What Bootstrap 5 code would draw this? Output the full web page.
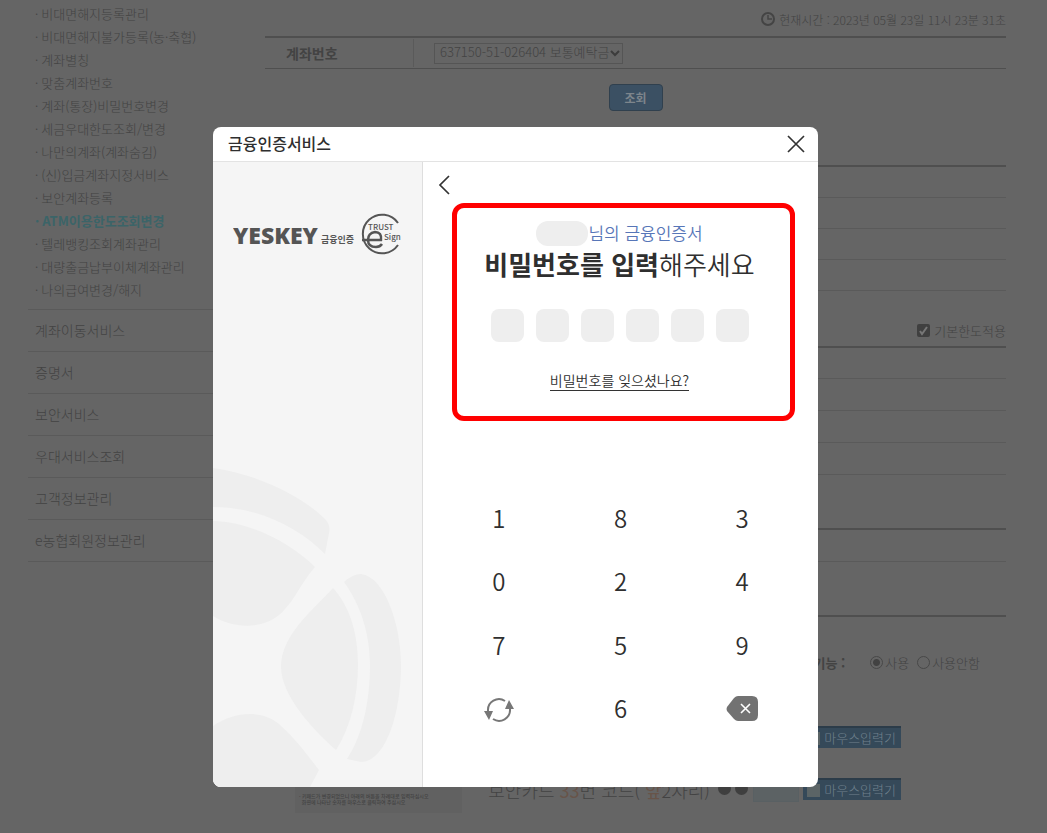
<!DOCTYPE html>
<html lang="ko">
<head>
<meta charset="utf-8">
<meta name="viewport" content="width=device-width, initial-scale=1">
<title>금융인증서비스</title>
<link href="https://cdn.jsdelivr.net/npm/bootstrap@5.3.0/dist/css/bootstrap.min.css" rel="stylesheet">
<style>
  :root { --ink:#434343; --line:#5a5a5a; --rule:#4f4f4f; --navy:#354959; }
  body { background:#656565; color:var(--ink); font-family:"Noto Sans CJK KR","Noto Sans",sans-serif; font-size:13px; line-height:23px; font-weight:300; min-height:100vh; overflow:hidden; }
  a { color:inherit; text-decoration:none; }
  button { font-family:inherit; }

  /* dimmed bank page */
  .bank-page { padding-left:28px; padding-right:41px; }
  .side-menu { width:198px; flex:none; }
  .sub-menu { padding:2px 0 8px 7px; }
  .sub-menu a::before { content:"·"; margin-right:3px; }
  .sub-menu .current { color:#3b6468; font-weight:700; }
  .side-link { display:block; height:42px; line-height:41px; padding-left:7px; font-size:14px; border-top:1px solid var(--line); }
  .side-end { border-top:1px solid var(--line); }
  .bank-main { margin-left:39px; min-width:0; }
  .clock-row { height:36px; padding-top:2px; font-size:12px; }
  .account-row { border-top:2px solid var(--rule); border-bottom:1px solid var(--rule); height:33px; }
  .account-label { width:149px; padding-left:21px; border-right:1px solid var(--line); font-weight:700; font-size:14px; line-height:28px; }
  .account-select { width:189px; height:21px; margin-left:20px; padding:0 5px 3px; background:transparent; color:var(--ink); border:1px solid #555; border-radius:0; font-size:13px; line-height:16px; font-weight:300; appearance:none; }
  .select-box { position:relative; }
  .select-box svg { position:absolute; right:3px; top:7px; pointer-events:none; }
  .query-button { width:54px; height:27px; margin-top:15px; margin-bottom:54px; border:1px solid #30404e; border-radius:4px; background:#3b5063; color:#7d858c; font-size:12px; font-weight:700; line-height:24px; padding:0; }
  .limit-table { width:100%; border-top:2px solid var(--rule); border-bottom:1px solid var(--rule); }
  .limit-table td { height:32px; padding:0; border-bottom:1px solid var(--line); }
  .limit-table.compact td { height:31px; }
  .transfer-table { margin-top:53px; }
  .section-rule { margin-top:53px; border-top:2px solid var(--rule); }
  .option-row { height:55px; padding-top:24px; }
  .tick { appearance:none; width:13px; height:13px; margin:0 4px 0 0; border-radius:2px; background:#404040 url("data:image/svg+xml,%3Csvg xmlns='http://www.w3.org/2000/svg' viewBox='0 0 13 13'%3E%3Cpath d='M3 7l2 3 5-7' fill='none' stroke='%23777' stroke-width='2'/%3E%3C/svg%3E"); }
  .dot-radio { appearance:none; width:13px; height:13px; margin:0 2px 0 0; border:1px solid #484848; border-radius:50%; }
  .dot-radio:checked { background:radial-gradient(circle,#424242 0 3px,transparent 4px); }
  .use-row { padding:34px 26px 0 0; }
  .use-title { margin-right:25px; font-weight:700; }
  .mouse-row { padding:52px 105px 0 0; }
  .mouse-button { width:98px; height:22px; padding:0 5px 0 0; border:0; border-top:2px solid #2c3c49; background:var(--navy); color:#70818d; font-size:13px; font-weight:300; line-height:18px; text-align:right; }
  .mouse-button i { float:left; width:13px; height:13px; margin:3px 0 0 4px; background:#5b6466; }
  .card-row { margin-top:6px; padding-right:105px; }
  .key-notice { width:168px; height:58px; margin:1px 26px 0 30px; background:#616161; font-size:5px; line-height:6px; font-weight:500; }
  .key-caps { height:38px; padding:27px 27px 8px 6px; }
  .key-caps i { width:8px; height:4px; background:#353e43; }
  .card-prompt { font-size:18px; line-height:24px; width:231px; white-space:nowrap; }
  .card-prompt b { color:#685449; }
  .masked i { display:inline-block; width:13px; height:13px; border-radius:50%; background:#3f3f3f; }
  .code-input { width:46px; height:24px; margin:0 4px 0 5px; padding:0 0 6px; border:1px solid #596063; background:#5c6264; color:#444; font-size:10px; text-align:center; }

  /* certificate dialog */
  .dialog-layer { position:absolute; inset:0 0 auto 0; padding:127px 16px 0 0; }
  .cert-dialog { width:605px; max-width:100%; background:#fff; border-radius:8px; overflow:hidden; color:#2f2f2f; }
  .cert-head { height:35px; padding:0 13px 0 15px; border-bottom:1px solid #e3e3e3; }
  .cert-head h1 { font-size:16px; line-height:32px; font-weight:500; margin:0 0 2px; }
  .plain-button { padding:0; border:0; background:none; color:inherit; line-height:0; }
  .cert-brand { width:210px; flex:none; background:#f5f5f5; border-right:1px solid #dedede; }
  .brand-logo { margin:48px 0 0 20px; color:#555; }
  .cert-body { padding:13px 15px 46px; min-width:0; }
  .back-button { margin-bottom:8px; align-self:flex-start; }
  .pin-box { border:5px solid #f00; border-radius:12px; margin:0 8px 0 14px; padding:13px 8px 21px 0; height:218px; }
  .owner { color:#5776b8; font-size:17px; line-height:24px; font-weight:350; }
  .owner-name { width:52px; height:25px; border-radius:12px; background:#eee; }
  .pin-title { font-size:26px; line-height:34px; font-weight:350; margin:1px 0 0; white-space:nowrap; }
  .pin-title b { font-weight:700; }
  .pin-cells { gap:12px; margin-top:28px; }
  .pin-cells input { width:33px; height:33px; border:0; border-radius:8px; background:#eee; text-align:center; }
  .forgot { margin-top:29px; font-size:14px; line-height:19px; font-weight:350; border-bottom:1px solid #333; }
  .keypad { display:grid; grid-template-columns:repeat(3,1fr); grid-template-rows:repeat(4,1fr); height:254px; margin-top:66px; }
  .keypad button { font-size:24px; font-weight:350; line-height:1; padding-bottom:2px; }
</style>
</head>
<body>
<div class="bank-page d-flex">
  <nav class="side-menu">
    <ul class="sub-menu list-unstyled mb-0 text-nowrap">
      <li><a href="#">비대면해지등록관리</a></li>
      <li><a href="#">비대면해지불가등록(농·축협)</a></li>
      <li><a href="#">계좌별칭</a></li>
      <li><a href="#">맞춤계좌번호</a></li>
      <li><a href="#">계좌(통장)비밀번호변경</a></li>
      <li><a href="#">세금우대한도조회/변경</a></li>
      <li><a href="#">나만의계좌(계좌숨김)</a></li>
      <li><a href="#">(신)입금계좌지정서비스</a></li>
      <li><a href="#">보안계좌등록</a></li>
      <li><a href="#" class="current">ATM이용한도조회변경</a></li>
      <li><a href="#">텔레뱅킹조회계좌관리</a></li>
      <li><a href="#">대량출금납부이체계좌관리</a></li>
      <li><a href="#">나의급여변경/해지</a></li>
    </ul>
    <a class="side-link" href="#">계좌이동서비스</a>
    <a class="side-link" href="#">증명서</a>
    <a class="side-link" href="#">보안서비스</a>
    <a class="side-link" href="#">우대서비스조회</a>
    <a class="side-link" href="#">고객정보관리</a>
    <a class="side-link" href="#">e농협회원정보관리</a>
    <div class="side-end"></div>
  </nav>

  <main class="bank-main flex-grow-1">
    <div class="clock-row d-flex justify-content-end align-items-center">
      <svg class="me-1" width="14" height="14" viewBox="0 0 14 14" fill="none" stroke="#444" stroke-width="2"><circle cx="7" cy="7" r="6"/><path d="M7 3v4h4" stroke-width="1.5"/></svg>
      현재시간 : 2023년 05월 23일 11시 23분 31초
    </div>
    <div class="account-row d-flex align-items-center">
      <label class="account-label" for="account">계좌번호</label>
      <div class="select-box d-flex">
        <select class="account-select" id="account"><option>637150-51-026404 보통예탁금</option></select>
        <svg width="10" height="7" viewBox="0 0 10 7" fill="none" stroke="#3c3c3c" stroke-width="2"><path d="M1 1l4 4 4-4"/></svg>
      </div>
    </div>
    <div class="text-center"><button class="query-button" type="button">조회</button></div>
    <table class="limit-table compact"><tbody><tr><td></td></tr><tr><td></td></tr><tr><td></td></tr><tr><td></td></tr></tbody></table>
    <div class="option-row d-flex justify-content-end align-items-center">
      <input class="tick" type="checkbox" id="basic" checked><label for="basic">기본한도적용</label>
    </div>
    <table class="limit-table"><tbody><tr><td></td></tr><tr><td></td></tr><tr><td></td></tr><tr><td></td></tr></tbody></table>
    <table class="limit-table transfer-table"><tbody><tr><td></td></tr></tbody></table>
    <div class="section-rule"></div>
    <div class="use-row d-flex justify-content-end align-items-center text-nowrap">
      <span class="use-title">기능 :</span>
      <input class="dot-radio" type="radio" name="use" id="use-on" checked><label class="me-2" for="use-on">사용</label>
      <input class="dot-radio" type="radio" name="use" id="use-off"><label for="use-off">사용안함</label>
    </div>
    <div class="mouse-row d-flex justify-content-end align-items-start">
      <button class="mouse-button" type="button"><i></i>마우스입력기</button>
    </div>
    <div class="card-row d-flex justify-content-end align-items-start">
      <div class="key-notice">
        <div class="key-caps d-flex justify-content-between"><i></i><i></i><i></i><i></i></div>
        <div class="ps-1">· 키패드가 변경되었으니 아래의 버튼을 차례대로 입력하십시오<br>&nbsp; 화면에 나타난 숫자를 마우스로 클릭하여 주십시오</div>
      </div>
      <label class="card-prompt mt-4" for="code">보안카드 <b>33</b>번 코드( <b>앞</b>2자리)</label>
      <span class="masked d-flex gap-1 mt-4 pt-1"><i></i><i></i></span>
      <input class="code-input mt-4" id="code" value="**" type="text">
      <button class="mouse-button mt-4" type="button"><i></i>마우스입력기</button>
    </div>
  </main>
</div>

<div class="dialog-layer d-flex justify-content-center">
  <section class="cert-dialog d-flex flex-column" role="dialog" aria-labelledby="cert-title">
    <header class="cert-head d-flex justify-content-between align-items-center">
      <h1 id="cert-title">금융인증서비스</h1>
      <button class="plain-button" type="button" aria-label="닫기"><svg width="18" height="18" viewBox="0 0 18 18" fill="none" stroke="#333" stroke-width="1.7"><path d="M1 1l16 16M17 1L1 17"/></svg></button>
    </header>
    <div class="d-flex">
      <aside class="cert-brand d-flex flex-column">
        <svg class="brand-logo" width="172" height="48" viewBox="0 0 172 48" fill="#555" font-family="'Noto Sans CJK KR',sans-serif" font-weight="700">
          <text x="0" y="34" font-family="'Open Sans','Noto Sans',sans-serif" font-weight="800" font-size="23">YESKEY</text>
          <text x="88" y="33" font-size="9">금융인증</text>
          <path d="M165 13A19.300 19.300 0 1 0 165 35" fill="none" stroke="#555" stroke-width="2"/>
          <text x="135" y="20" font-size="8" font-weight="500">TRUST</text>
          <text x="151" y="30" font-size="8" font-weight="500">Sign</text>
          <path d="M129 30H148Q149 22 142 22Q135 23 135 30Q135 37 143 37Q147 37 149 34" fill="none" stroke="#555" stroke-width="2.500"/>
        </svg>
        <svg class="mt-auto" width="209" height="322" viewBox="0 0 209 322" fill="#eee" aria-hidden="true">
          <path d="M0 3C45 9 90 32 112 54Q118 60 116 68L112 89C85 62 45 42 0 42Z"/>
          <path d="M0 56C40 57 80 80 102 102C88 118 82 134 72 144C55 165 22 165 0 151Z"/>
          <path d="M120 123C138 143 145 170 145 200C145 230 138 262 123 285C100 265 68 230 68 202C68 170 100 145 120 123Z"/>
          <path d="M131 117Q140 109 148 109C172 112 188 160 188 200C188 250 172 297 148 297L134 294C150 270 157 235 157 200C157 170 148 140 131 117Z"/>
          <path d="M0 261C20 247 48 244 66 259C84 275 95 291 106 305L97 322H0Z"/>
        </svg>
      </aside>
      <div class="cert-body flex-grow-1 d-flex flex-column">
        <button class="plain-button back-button" type="button" aria-label="뒤로"><svg width="12" height="20" viewBox="0 0 12 20" fill="none" stroke="#333" stroke-width="1.7"><path d="M11 1L2 10l9 9"/></svg></button>
        <div class="pin-box d-flex flex-column align-items-center">
          <div class="owner d-flex"><span class="owner-name"></span>님의 금융인증서</div>
          <h2 class="pin-title"><b>비밀번호를 입력</b>해주세요</h2>
          <div class="pin-cells d-flex">
            <input type="password" maxlength="1" aria-label="1번째 자리"><input type="password" maxlength="1" aria-label="2번째 자리"><input type="password" maxlength="1" aria-label="3번째 자리"><input type="password" maxlength="1" aria-label="4번째 자리"><input type="password" maxlength="1" aria-label="5번째 자리"><input type="password" maxlength="1" aria-label="6번째 자리">
          </div>
          <a class="forgot" href="#">비밀번호를 잊으셨나요?</a>
        </div>
        <div class="keypad">
          <button class="plain-button" type="button">1</button><button class="plain-button" type="button">8</button><button class="plain-button" type="button">3</button>
          <button class="plain-button" type="button">0</button><button class="plain-button" type="button">2</button><button class="plain-button" type="button">4</button>
          <button class="plain-button" type="button">7</button><button class="plain-button" type="button">5</button><button class="plain-button" type="button">9</button>
          <button class="plain-button" type="button" aria-label="재배열"><svg width="30" height="24" viewBox="0 0 30 24" fill="none" stroke="#777" stroke-width="2"><path d="M4 13A11 11 0 0 1 21 3M26 11A11 11 0 0 1 9 21"/><path d="M0 13h9l-4 9zM21 11h9L25 2z" fill="#777" stroke="none"/></svg></button>
          <button class="plain-button" type="button">6</button>
          <button class="plain-button" type="button" aria-label="지우기"><svg width="32" height="26" viewBox="0 0 32 26"><path d="M12 0h14q6 0 6 6v13q0 6-6 6H12q-2 0-4-2L1 15q-1-2 0-4L8 2q2-2 4-2z" fill="#727272"/><path d="M15 8l9 9M24 8l-9 9" stroke="#fff" stroke-width="1.6"/></svg></button>
        </div>
      </div>
    </div>
  </section>
</div>
<script src="https://cdn.jsdelivr.net/npm/bootstrap@5.3.0/dist/js/bootstrap.bundle.min.js"></script>
</body>
</html>
